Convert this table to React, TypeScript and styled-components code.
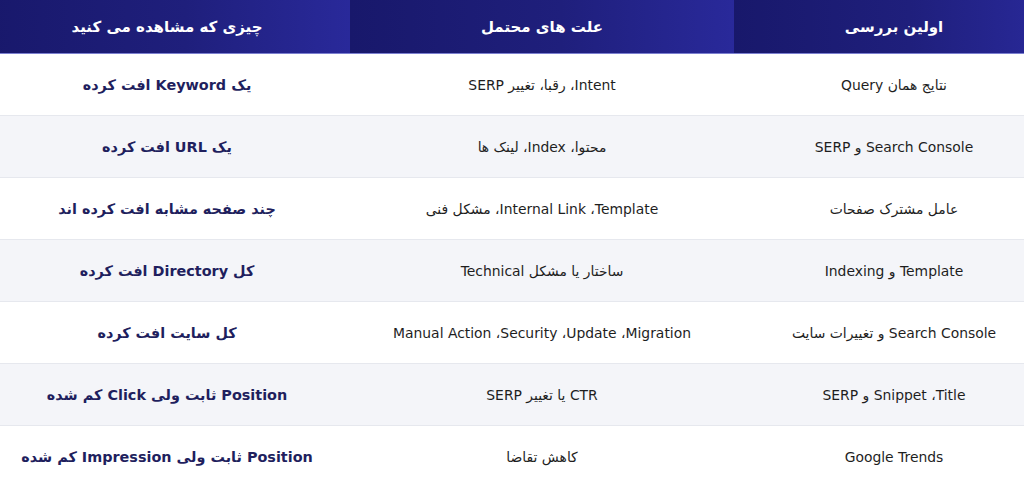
import React from "react";
import styled, { createGlobalStyle } from "styled-components";

const Global = createGlobalStyle`
  html, body { margin: 0; padding: 0; background: #ffffff; }
  body { font-family: "DejaVu Sans", "Noto Sans", sans-serif; overflow: hidden; }
`;

const Viewport = styled.div`
  width: 1024px;
  overflow: hidden;
`;

const Table = styled.div`
  width: 1070px;
  margin-left: -16px;
  display: grid;
  grid-template-columns: 366px 384px 320px;
`;

const HeadCell = styled.div`
  height: 53px;
  border-bottom: 1px solid #7b7fd0;
  background: linear-gradient(to right, #18186b 0%, #1f1f7c 55%, #29299a 100%);
  color: #ffffff;
  display: flex;
  align-items: center;
  justify-content: center;
  direction: rtl;
  font-family: "DejaVu Sans", sans-serif;
  font-weight: 700;
  font-size: 15px;
`;

const Cell = styled.div<{ $alt: boolean; $strong?: boolean }>`
  height: 61px;
  border-bottom: 1px solid #e6e8ee;
  background: ${(p) => (p.$alt ? "#f4f5f9" : "#ffffff")};
  display: flex;
  align-items: center;
  justify-content: center;
  direction: rtl;
  font-family: "DejaVu Sans", sans-serif;
  font-size: ${(p) => (p.$strong ? "14.4px" : "13.9px")};
  font-weight: ${(p) => (p.$strong ? 700 : 400)};
  color: ${(p) => (p.$strong ? "#1f1f5e" : "#1e1e1e")};
  white-space: nowrap;
`;

const R = "\u200F";

const rows: [string, string, string][] = [
  ["یک Keyword افت کرده", "Intent، رقبا، تغییر SERP", "نتایج همان Query"],
  ["یک URL افت کرده", "محتوا، Index، لینک ها", "Search Console و SERP"],
  ["چند صفحه مشابه افت کرده اند", `Template،${R} Internal Link،${R} مشکل فنی`, "عامل مشترک صفحات"],
  ["کل Directory افت کرده", "ساختار یا مشکل Technical", "Template و Indexing"],
  [
    "کل سایت افت کرده",
    `Migration،${R} Update،${R} Security،${R} Manual Action`,
    "Search Console و تغییرات سایت",
  ],
  ["Position ثابت ولی Click کم شده", "CTR یا تغییر SERP", `Title،${R} Snippet و SERP`],
  ["Position ثابت ولی Impression کم شده", "کاهش تقاضا", "Google Trends"],
];

export default function App() {
  return (
    <>
      <Global />
      <Viewport>
        <Table>
          <HeadCell>چیزی که مشاهده می کنید</HeadCell>
          <HeadCell>علت های محتمل</HeadCell>
          <HeadCell>اولین بررسی</HeadCell>
          {rows.map((r, i) => (
            <React.Fragment key={i}>
              <Cell $alt={i % 2 === 1} $strong>{r[0]}</Cell>
              <Cell $alt={i % 2 === 1}>{r[1]}</Cell>
              <Cell $alt={i % 2 === 1}>{r[2]}</Cell>
            </React.Fragment>
          ))}
        </Table>
      </Viewport>
    </>
  );
}
